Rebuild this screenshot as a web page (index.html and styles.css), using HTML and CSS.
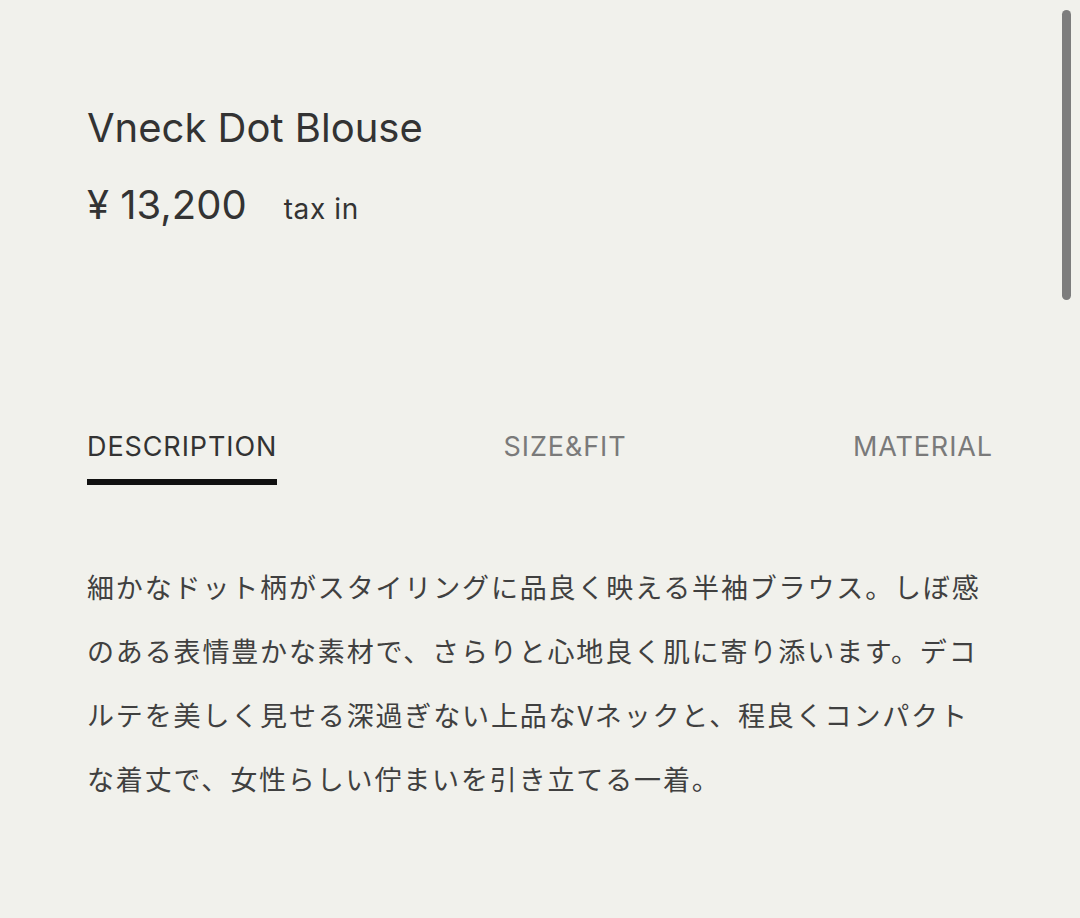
FILE: index.html
```
<!DOCTYPE html>
<html lang="ja">
<head>
<meta charset="utf-8">
<title>Vneck Dot Blouse</title>
<link rel="stylesheet" href="styles.css">
</head>
<body>
<div class="page">
  <header class="product">
    <h1 class="title">Vneck Dot Blouse</h1>
    <div class="price-row">
      <span class="price">¥ 13,200</span>
      <span class="tax">tax in</span>
    </div>
  </header>
  <nav class="tabs">
    <span class="tab active">DESCRIPTION</span>
    <span class="tab">SIZE&amp;FIT</span>
    <span class="tab">MATERIAL</span>
  </nav>
  <p class="desc">細かなドット柄がスタイリングに品良く映える半袖ブラウス。しぼ感のある表情豊かな素材で、さらりと心地良く肌に寄り添います。デコルテを美しく見せる深過ぎない上品なVネックと、程良くコンパクトな着丈で、女性らしい佇まいを引き立てる一着。</p>
</div>
<div class="scrollbar"></div>
</body>
</html>
```
FILE: styles.css
```
html, body {
  margin: 0;
  padding: 0;
  background: #f1f1ec;
}
body {
  width: 1080px;
  height: 918px;
  overflow: hidden;
  position: relative;
  font-family: "Inter", "Noto Sans CJK JP", sans-serif;
  color: #333;
}
.page {
  padding: 108px 87px 0 87px;
}
.title {
  margin: 0;
  font-size: 40px;
  line-height: 40px;
  font-weight: 400;
  color: #333;
}
.price-row {
  margin-top: 37px;
  display: flex;
  align-items: baseline;
  gap: 37px;
}
.price {
  font-size: 40px;
  line-height: 40px;
}
.tax {
  font-size: 28px;
  line-height: 28px;
  letter-spacing: 0.6px;
}
.tabs {
  margin-top: 208px;
  display: flex;
  justify-content: space-between;
  align-items: flex-start;
  width: 906px;
}
.tab {
  font-size: 27px;
  line-height: 27px;
  letter-spacing: 0.9px;
  color: #7a7a7a;
  padding-bottom: 19px;
  border-bottom: 6px solid transparent;
}
.tab.active {
  color: #333;
  border-bottom-color: #111;
}
.desc {
  margin: 70px 0 0 0;
  width: 900px;
  font-size: 27px;
  line-height: 64px;
  letter-spacing: 1.85px;
  color: #404040;
  font-family: "Noto Sans CJK JP", "Inter", sans-serif;
}
.scrollbar {
  position: absolute;
  top: 10px;
  left: 1062px;
  width: 9px;
  height: 290px;
  border-radius: 5px;
  background: #7d7d7d;
}
```
